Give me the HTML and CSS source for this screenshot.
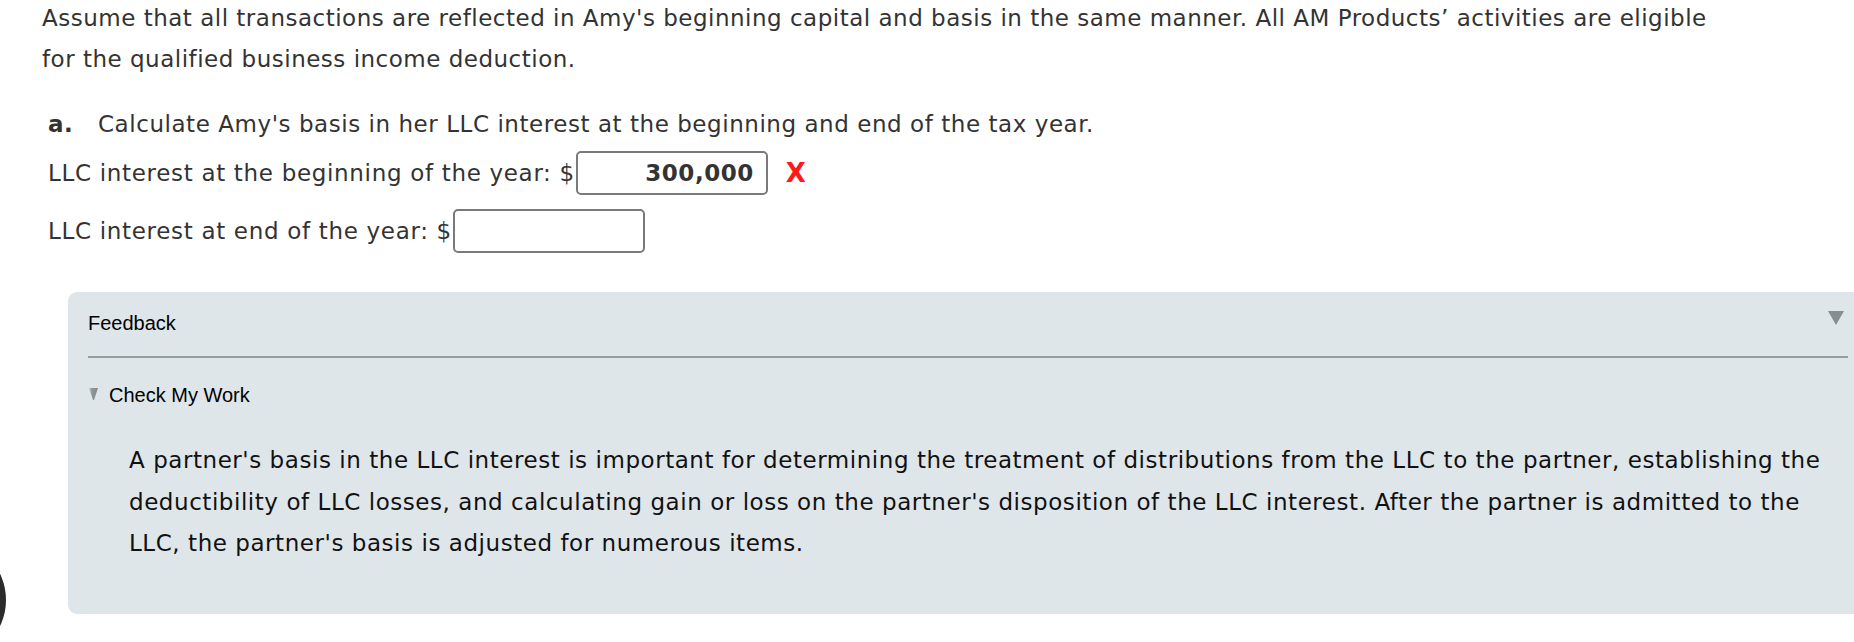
FILE: index.html
```html
<!DOCTYPE html>
<html lang="en">
<head>
<meta charset="utf-8">
<title>LLC interest</title>
<link rel="stylesheet" href="styles.css">
</head>
<body>
<main class="page">
  <p class="intro">Assume that all transactions are reflected in Amy's beginning capital and basis in the same manner. All AM Products’ activities are eligible for the qualified business income deduction.</p>

  <div class="question">
    <p class="q-title"><span class="q-label">a.</span><span>Calculate Amy's basis in her LLC interest at the beginning and end of the tax year.</span></p>
    <div class="row">
      <span class="row-label">LLC interest at the beginning of the year: $</span>
      <input class="field" type="text" value="300,000" readonly>
      <span class="wrong">X</span>
    </div>
    <div class="row">
      <span class="row-label">LLC interest at end of the year: $</span>
      <input class="field" type="text" value="">
    </div>
  </div>

  <section class="feedback">
    <div class="fb-head">
      <span class="fb-title">Feedback</span>
      <svg class="fb-toggle" width="16" height="14" viewBox="0 0 16 14"><polygon points="0,0 16,0 8,14" fill="#878d91"/></svg>
    </div>
    <div class="cmw">
      <svg class="cmw-icon" width="9" height="12" viewBox="0 0 9 12"><defs><linearGradient id="g" x1="0" x2="1" y1="0" y2="0"><stop offset="0" stop-color="#c3c8cb"/><stop offset="0.35" stop-color="#8e9397"/><stop offset="1" stop-color="#85898d"/></linearGradient></defs><polygon points="0,0 9,0 5,12 4,12" fill="url(#g)"/></svg>
      <span>Check My Work</span>
    </div>
    <p class="fb-text">A partner's basis in the LLC interest is important for determining the treatment of distributions from the LLC to the partner, establishing the deductibility of LLC losses, and calculating gain or loss on the partner's disposition of the LLC interest. After the partner is admitted to the LLC, the partner's basis is adjusted for numerous items.</p>
  </section>
</main>
<div class="chat-bubble"></div>
</body>
</html>
```

FILE: styles.css
```css
html, body {
  margin: 0;
  padding: 0;
  background: #ffffff;
  overflow: hidden;
}

body {
  width: 1854px;
  height: 642px;
  position: relative;
  font-family: "DejaVu Sans", Verdana, sans-serif;
  font-size: 23px;
  letter-spacing: 0.55px;
  color: #333333;
}

.intro {
  margin: -2px 0 0 42px;
  width: 1690px;
  line-height: 41px;
  letter-spacing: 0.5px;
}

.question {
  margin: 24px 0 0 48px;
}

.q-title {
  margin: 0;
  line-height: 41px;
  display: flex;
}

.q-label {
  font-weight: bold;
  width: 50px;
  flex: none;
}

.row {
  display: flex;
  align-items: center;
  margin-top: 6px;
}

.row + .row {
  margin-top: 14px;
}

.row-label {
  line-height: 28px;
  letter-spacing: 0.68px;
}

.field {
  box-sizing: border-box;
  width: 192px;
  height: 44px;
  margin: 0 0 0 1px;
  padding: 0 12px;
  border: 2px solid #7a7a7a;
  border-radius: 5px;
  background: #ffffff;
  font-family: "DejaVu Sans", Verdana, sans-serif;
  font-size: 23px;
  letter-spacing: 0.55px;
  font-weight: bold;
  color: #333333;
  text-align: right;
  outline: none;
}

.wrong {
  margin-left: 18px;
  font-family: "DejaVu Sans", Verdana, sans-serif;
  font-weight: bold;
  font-size: 26px;
  color: #ff1a1a;
  line-height: 28px;
}

.feedback {
  box-sizing: border-box;
  width: 1800px;
  margin: 39px 0 0 68px;
  padding: 19px 20px 49px 20px;
  background: #dfe6e9;
  border-radius: 9px;
  color: #000000;
}

.fb-head {
  display: flex;
  justify-content: space-between;
  align-items: flex-start;
  padding-bottom: 21px;
  border-bottom: 2px solid #979c9f;
  font-family: "Liberation Sans", Arial, sans-serif;
  font-size: 20px;
  letter-spacing: 0;
  line-height: 24px;
}

.fb-toggle {
  margin: 0 4px 0 0;
  display: block;
}

.cmw {
  margin-top: 25px;
  display: flex;
  align-items: center;
  font-family: "Liberation Sans", Arial, sans-serif;
  font-size: 20px;
  letter-spacing: 0;
  line-height: 24px;
}

.cmw-icon {
  display: block;
  margin: 0 11px 2px 1px;
}

.fb-text {
  margin: 33px 0 0 41px;
  font-size: 23px;
  line-height: 41.5px;
  color: #111111;
}

.chat-bubble {
  position: absolute;
  left: -114px;
  top: 540px;
  width: 120px;
  height: 120px;
  border-radius: 50%;
  background: #2b2b2b;
}
```
